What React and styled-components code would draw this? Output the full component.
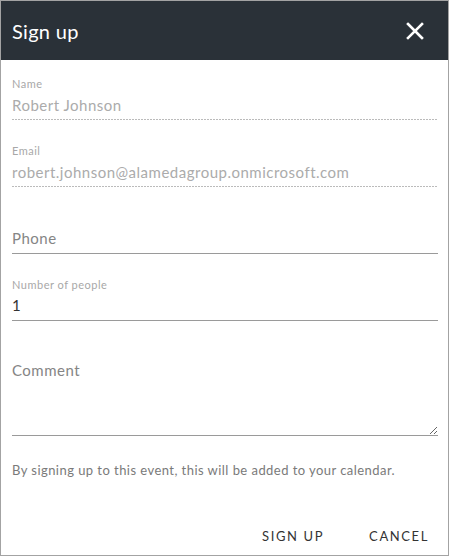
import React from 'react';
import styled, { createGlobalStyle } from 'styled-components';

const GlobalStyle = createGlobalStyle`
  html, body {
    margin: 0;
    padding: 0;
    background: #fff;
  }
  body {
    font-family: 'Lato', 'Open Sans', sans-serif;
  }
  * {
    box-sizing: border-box;
  }
`;

const fields = [
  { name: 'name', label: 'Name', value: 'Robert Johnson', disabled: true },
  {
    name: 'email',
    label: 'Email',
    value: 'robert.johnson@alamedagroup.onmicrosoft.com',
    disabled: true,
  },
  { name: 'phone', placeholder: 'Phone' },
  { name: 'people', label: 'Number of people', value: '1' },
];

const App = () => {
  return (
    <>
      <GlobalStyle />
      <Dialog>
        <Header>
          <Title>Sign up</Title>
          <CloseButton aria-label="Close">
            <svg width="18" height="18" viewBox="0 0 18 18">
              <path
                d="M2 2 L16 16 M16 2 L2 16"
                stroke="#fff"
                strokeWidth="2.6"
                strokeLinecap="square"
              />
            </svg>
          </CloseButton>
        </Header>

        <Body>
          {fields.map(f => (
            <Field key={f.name}>
              <Label>{f.label || '\u00a0'}</Label>
              <Input
                defaultValue={f.value}
                placeholder={f.placeholder}
                disabled={f.disabled}
                $dotted={f.disabled}
              />
            </Field>
          ))}

          <Field>
            <Label>{'\u00a0'}</Label>
            <TextArea placeholder="Comment" />
          </Field>

          <Note>By signing up to this event, this will be added to your calendar.</Note>
        </Body>

        <Actions>
          <ActionButton>Sign up</ActionButton>
          <ActionButton>Cancel</ActionButton>
        </Actions>
      </Dialog>
    </>
  );
};

export default App;

const Dialog = styled.div`
  width: 449px;
  height: 556px;
  border: 1px solid #a3a3a3;
  display: flex;
  flex-direction: column;
  background: #fff;
`;

const Header = styled.div`
  height: 59px;
  flex-shrink: 0;
  background: #2a3138;
  display: flex;
  align-items: center;
  justify-content: space-between;
  padding: 0 24px 0 11px;
`;

const Title = styled.h1`
  margin: 0;
  font-size: 20px;
  font-weight: 400;
  color: #fff;
  letter-spacing: 0.3px;
`;

const CloseButton = styled.button`
  border: 0;
  padding: 0;
  background: none;
  display: flex;
  cursor: pointer;
`;

const Body = styled.div`
  padding: 19px 10px 0 11px;
  display: flex;
  flex-direction: column;
  gap: 26px;
`;

const Field = styled.div`
  display: flex;
  flex-direction: column;
`;

const Label = styled.label`
  font-size: 11px;
  line-height: 10px;
  height: 14px;
  letter-spacing: 0.5px;
  color: #a8a8a8;
`;

const Input = styled.input`
  height: 27px;
  border: 0;
  padding: 0 0 4px 0;
  font-family: inherit;
  font-size: 15px;
  letter-spacing: 0.5px;
  color: ${p => (p.disabled ? '#ababab' : '#333')};
  background: ${p =>
    p.$dotted
      ? 'linear-gradient(to right, #bbbbbb 66%, transparent 0) left bottom / 3px 1px repeat-x'
      : 'transparent'};
  border-bottom: ${p => (p.$dotted ? '0' : '1px solid #9a9a9a')};
  outline: none;

  &::placeholder {
    color: #858585;
  }
`;

const TextArea = styled.textarea`
  height: 75px;
  border: 0;
  border-bottom: 1px solid #9a9a9a;
  padding: 0;
  font-family: inherit;
  font-size: 15px;
  line-height: 18px;
  letter-spacing: 0.5px;
  color: #333;
  resize: vertical;
  outline: none;

  &::placeholder {
    color: #858585;
  }
`;

const Note = styled.p`
  margin: 0;
  font-size: 13px;
  letter-spacing: 0.45px;
  color: #7a7a7a;
`;

const Actions = styled.div`
  margin-top: auto;
  display: flex;
  justify-content: flex-end;
  padding: 0 13px 7px 0;
  gap: 33px;
`;

const ActionButton = styled.button`
  border: 0;
  background: none;
  padding: 4px 6px;
  font-family: inherit;
  font-size: 13px;
  text-transform: uppercase;
  letter-spacing: 1.6px;
  color: #333;
  cursor: pointer;
`;
